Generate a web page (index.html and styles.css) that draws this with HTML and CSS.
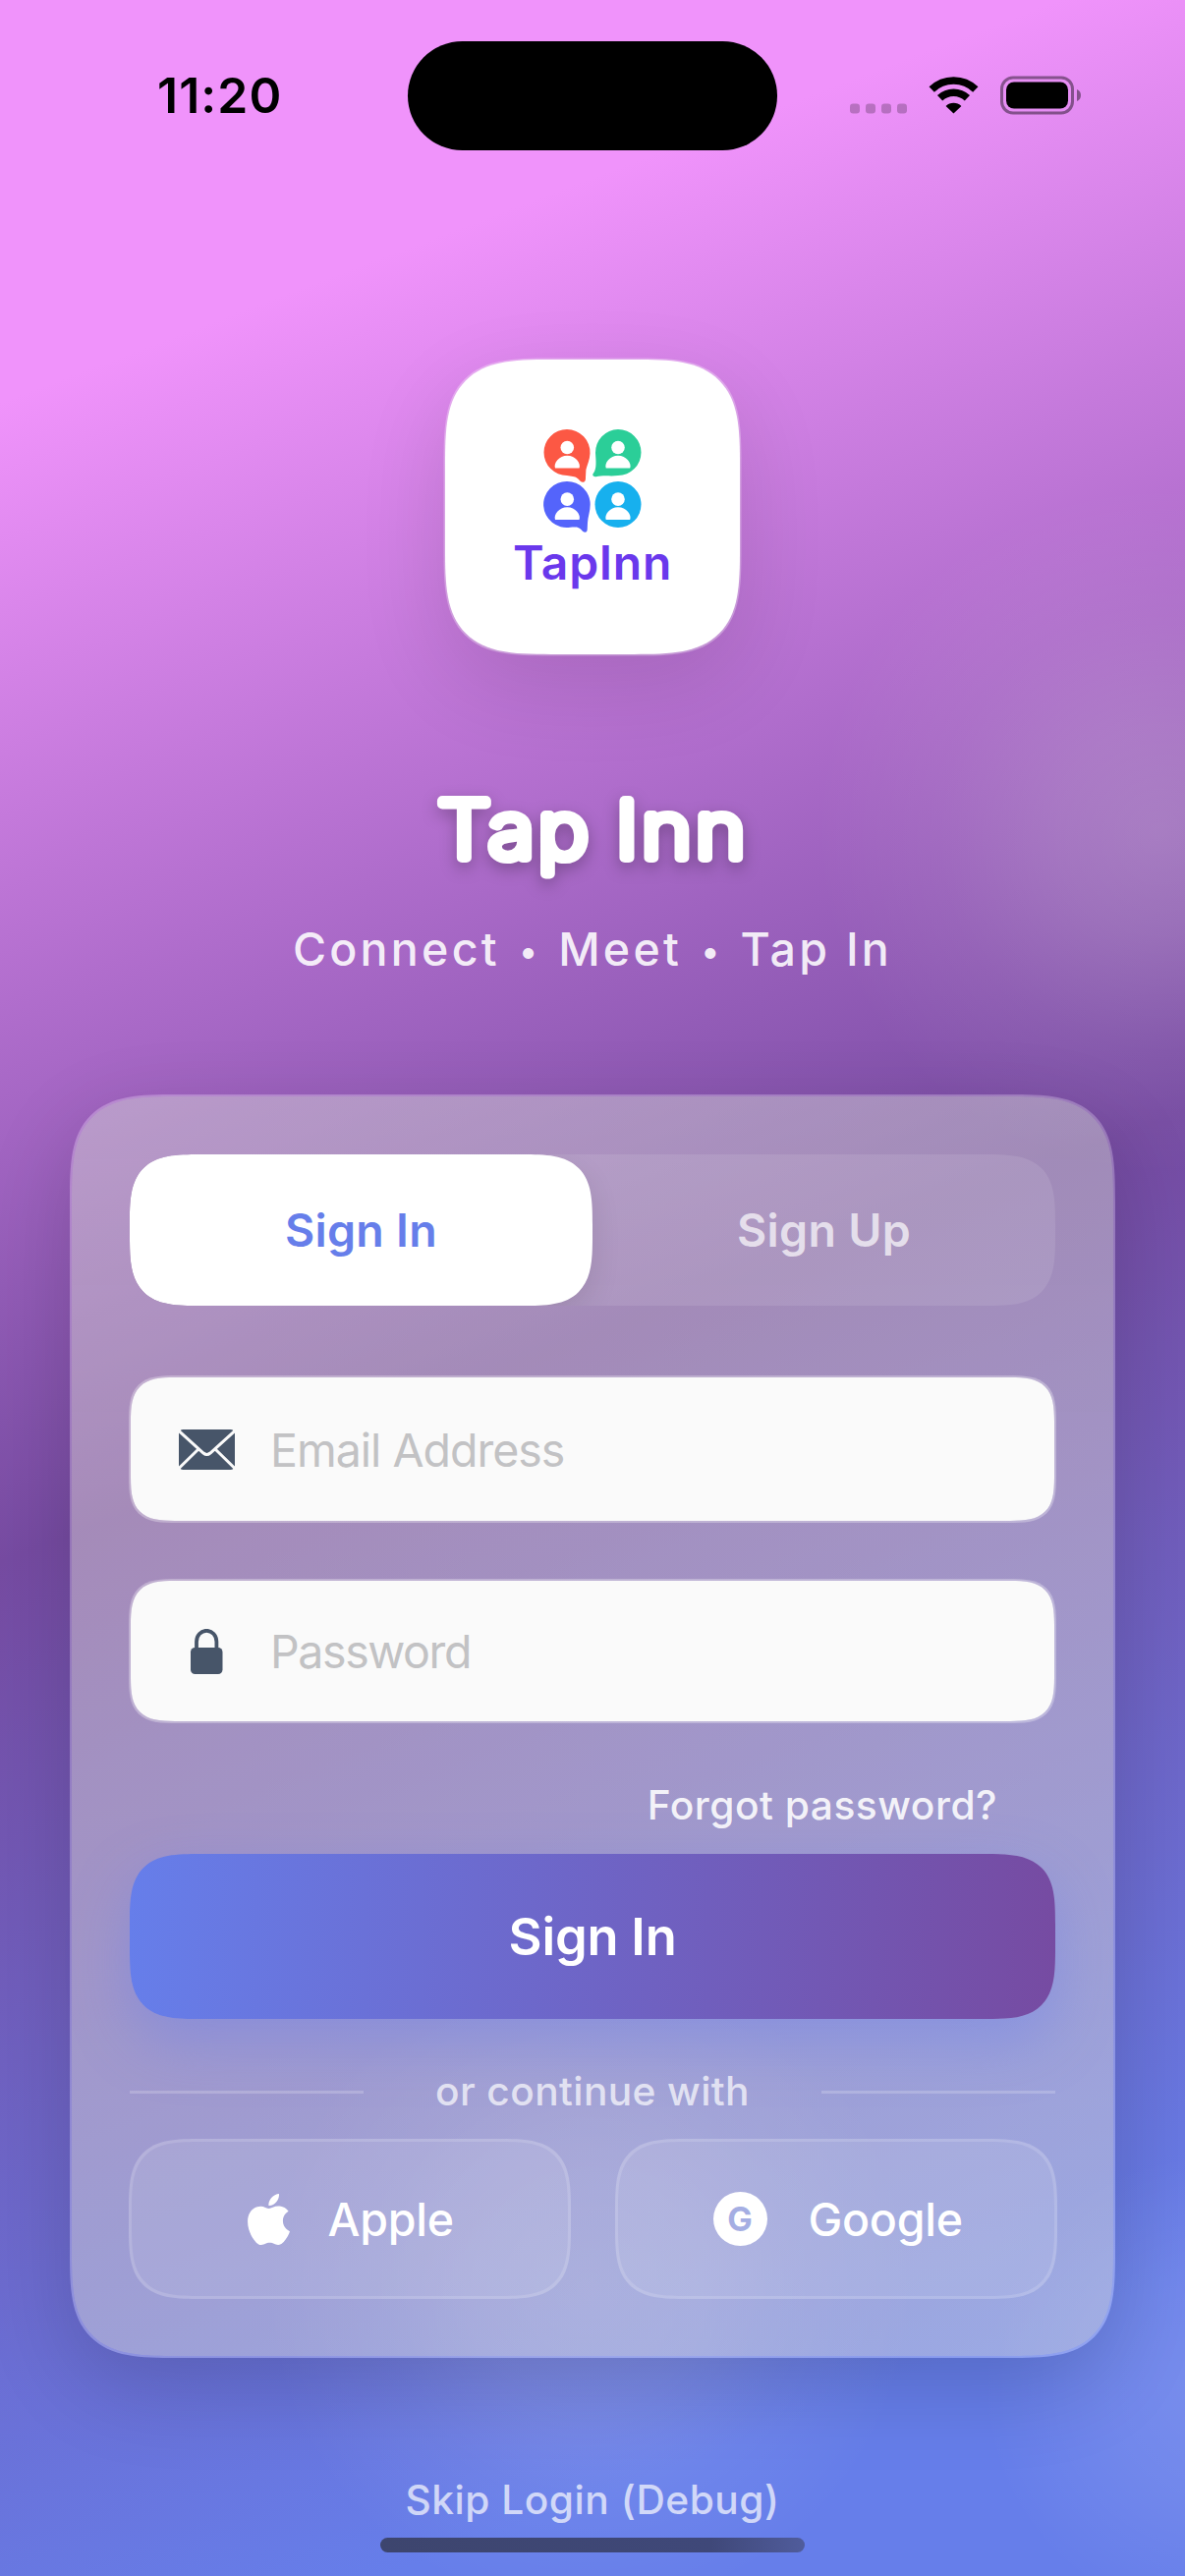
FILE: index.html
```html
<!DOCTYPE html>
<html lang="en">
<head>
<meta charset="utf-8">
<meta name="viewport" content="width=device-width">
<title>Tap Inn</title>
<link rel="stylesheet" href="styles.css">
</head>
<body>
<div class="screen">
  <header class="status">
    <span class="time">11:20</span>
    <span class="island"></span>
    <svg class="indicators" width="236" height="38" viewBox="0 0 236 38" aria-hidden="true">
      <g opacity=".22">
        <rect x="0" y="27.500" width="10" height="10" rx="3.2"/>
        <rect x="16" y="27.500" width="10" height="10" rx="3.2"/>
        <rect x="32" y="27.500" width="10" height="10" rx="3.2"/>
        <rect x="48" y="27.500" width="10" height="10" rx="3.2"/>
      </g>
      <g fill="none" stroke="#000" stroke-width="7.6">
        <path d="M83.2 13.1a32 32 0 0 1 44.6 0"/>
        <path d="M91.6 21.8a20.2 20.2 0 0 1 27.8 0"/>
      </g>
      <path d="M97.6 29.9a11.4 11.4 0 0 1 15.8 0L105.5 37.500z"/>
      <g opacity=".42">
        <rect x="154.5" y="1" width="72" height="36" rx="11.5" fill="none" stroke="#000" stroke-width="3"/>
        <path d="M231 13v12c2.600-1 4-3.300 4-6s-1.400-5-4-6z"/>
      </g>
      <rect x="159" y="5.500" width="63" height="27" rx="8"/>
    </svg>
  </header>

  <div class="logo">
    <svg width="100" height="106" viewBox="0 0 100 106" aria-hidden="true">
      <path fill="#fc5844" d="M24 0a23.500 23.500 0 0 1 23.500 24.500c-.2 6-2.900 11.500-4.100 16.500l-.5 10c-.2 3-3.300 3.600-5.300 1.800-3-3.600-5-4.800-9-5.100l-4.600-.7A23.500 23.500 0 0 1 24 0z"/>
      <path fill="#2bce98" d="M76 0a23.500 23.500 0 0 1 0 47c-7 1-15-.5-22.500 1.200-2.500.5-4.300-1.800-2.500-3.600C54.500 40 53.500 32 53 24A23.400 23.400 0 0 1 76 0z"/>
      <path fill="#5464fb" d="M24.300 53a23.500 23.500 0 0 1 23.400 23.500c0 7-2.500 13-2.700 18.500l-.3 7c-.3 3.300-2.700 3.400-4.700 1.700-4-5-7.700-4-12.700-4A23.500 23.500 0 1 1 24.300 53z"/>
      <circle cx="76" cy="76.500" r="23.500" fill="#17b0ee"/>
      <g fill="#fff">
        <g id="person"><circle cx="24.300" cy="18.500" r="6.800"/><path d="M12 39.500c-2-5 4-12.800 12.300-12.800S38.500 34.500 36.500 39.500z"/></g>
        <use href="#person" x="51.700"/>
        <use href="#person" y="52.600"/>
        <use href="#person" x="51.700" y="52.600"/>
      </g>
    </svg>
    <span class="logo-name">TapInn</span>
  </div>

  <h1 class="title">
    <svg width="360" height="120" viewBox="0 0 360 120"><text transform="translate(22.500 88.500) scale(1.08 1)">Tap Inn</text></svg>
  </h1>
  <p class="subtitle">Connect <span class="dot">•</span> Meet <span class="dot">•</span> Tap In</p>

  <main class="card">
    <div class="tabs">
      <button class="tab active">Sign In</button>
      <button class="tab">Sign Up</button>
    </div>

    <label class="field email">
      <svg width="57" height="41" viewBox="0 0 57 41" aria-hidden="true">
        <rect width="57" height="41" rx="4.500" fill="#475569"/>
        <path d="M-1 .5 25 24q3.500 3 7 0L58 .5M-1 40.500 20.500 19.500M58 40.500 36.500 19.500" fill="none" stroke="#fafafa" stroke-width="3"/>
      </svg>
      <input type="email" placeholder="Email Address">
    </label>

    <label class="field password">
      <svg width="57" height="46" viewBox="0 0 57 46" aria-hidden="true">
        <path d="M18 21V13a10.200 11.200 0 0 1 20.400 0v8" fill="none" stroke="#475569" stroke-width="3.800"/>
        <rect x="12" y="19" width="32.500" height="27" rx="4.500" fill="#475569"/>
      </svg>
      <input type="password" placeholder="Password">
    </label>

    <a class="forgot">Forgot password?</a>
    <button class="submit">Sign In</button>

    <div class="divider"><span>or continue with</span></div>

    <div class="social">
      <button class="provider apple">
        <svg width="43" height="52" viewBox="2.200 0 19.600 24" preserveAspectRatio="none" aria-hidden="true"><path fill="#fff" d="M12.152 6.896c-.948 0-2.415-1.078-3.96-1.040-2.040.027-3.910 1.183-4.961 3.014-2.117 3.675-.546 9.103 1.519 12.090 1.013 1.454 2.208 3.090 3.792 3.039 1.520-.065 2.090-.987 3.935-.987 1.831 0 2.350.987 3.960.948 1.637-.026 2.676-1.480 3.676-2.948 1.156-1.688 1.636-3.325 1.662-3.415-.039-.013-3.182-1.221-3.220-4.857-.026-3.040 2.480-4.494 2.597-4.559-1.429-2.090-3.623-2.324-4.390-2.376-2-.156-3.675 1.090-4.610 1.090zM15.530 3.830c.843-1.012 1.400-2.427 1.245-3.830-1.207.052-2.662.805-3.532 1.818-.780.896-1.454 2.338-1.273 3.714 1.338.104 2.715-.688 3.559-1.701"/></svg>
        <span>Apple</span>
      </button>
      <button class="provider google">
        <b class="g-mark">G</b>
        <span>Google</span>
      </button>
    </div>
  </main>

  <a class="skip">Skip Login (Debug)</a>
  <div class="home-bar"></div>
</div>
</body>
</html>
```
FILE: styles.css
```css
* { box-sizing: border-box; margin: 0; }

body { font-family: Inter, "Liberation Sans", sans-serif; }

button, input { font: inherit; border: 0; padding: 0; background: none; letter-spacing: inherit; }

.screen {
  display: flex;
  flex-direction: column;
  align-items: center;
  width: 1206px;
  height: 2622px;
  overflow: hidden;
  background:
    radial-gradient(circle 350px at 1180px 845px, rgba(245,255,235,.2) 0%, rgba(245,255,235,.15) 30%, rgba(245,255,235,.06) 64%, rgba(245,255,235,0) 100%),
    radial-gradient(circle 330px at 600px 2330px, rgba(255,255,255,.16) 0%, rgba(255,255,255,.12) 35%, rgba(255,255,255,.05) 65%, rgba(255,255,255,0) 100%),
    radial-gradient(circle 240px at 1240px 2430px, rgba(255,255,255,.12) 0%, rgba(255,255,255,.08) 45%, rgba(255,255,255,0) 100%),
    linear-gradient(159.2deg, #f093fb 13.3%, #764ba2 51.6%, #667eea 90%);
}
.screen > *, .card > * { flex-shrink: 0; }

/* Status bar */
.status {
  display: grid;
  grid-template-columns: 415px 376px 415px;
  align-items: center;
  width: 100%;
  height: 111px;
  margin-top: 41.5px;
}
.time {
  padding-left: 160px;
  font-size: 49.8px;
  font-weight: 600;
  line-height: 60px;
  letter-spacing: 1.1px;
}
.island { height: 111px; border-radius: 56px; background: #000; }
.indicators { margin-left: 74px; overflow: visible; }

/* Brand */
.logo {
  display: flex;
  flex-direction: column;
  align-items: center;
  width: 300px;
  height: 300px;
  margin-top: 213.5px;
  padding-top: 71px;
  border-radius: 108px;
  corner-shape: superellipse(1.67);
  background: #fff;
  box-shadow: 0 0 0 1.5px rgba(255,255,255,.3), 0 30px 90px rgba(0,0,0,.12);
}
.logo svg { flex: none; overflow: visible; }
.logo-name {
  color: #6a38ec;
  font-size: 48px;
  font-weight: 600;
  line-height: 60px;
  letter-spacing: .73px;
}

.title { height: 120px; margin-top: 118px; }
.title svg { display: block; overflow: visible; filter: drop-shadow(0 6px 8px rgba(0,0,0,.26)); }
.title text {
  fill: #fff;
  stroke: #fff;
  stroke-width: 10.2px;
  stroke-linejoin: round;
  stroke-linecap: round;
  font-size: 79.5px;
  font-weight: 250;
  letter-spacing: 4px;
  word-spacing: -4px;
}
.subtitle {
  margin-top: 32px;
  color: rgba(255,255,255,.9);
  font-size: 46.5px;
  font-weight: 500;
  line-height: 60px;
  letter-spacing: 3.26px;
}
.dot {
  display: inline-block;
  width: 28px;
  font-size: 35px;
  letter-spacing: 0;
  line-height: 50px;
  text-align: center;
  transform: translate(-1px, -2px);
}

/* Form card */
.card {
  display: flex;
  flex-direction: column;
  width: 1064px;
  height: 1286px;
  margin-top: 118px;
  padding: 59px;
  border: 2px solid rgba(255,255,255,.24);
  border-radius: 109px;
  corner-shape: superellipse(1.67);
  background: linear-gradient(180deg, rgba(216,224,213,.43), rgba(230,228,217,.42) 30%);
  background-clip: padding-box;
  box-shadow: 0 30px 90px rgba(0,0,0,.16);
}

.tabs {
  display: grid;
  grid-template-columns: 1fr 1fr;
  height: 154px;
  overflow: hidden;
  border-radius: 72px;
  corner-shape: superellipse(1.67);
  background: rgba(255,255,255,.1);
}
.tab {
  border-radius: 72px;
  corner-shape: superellipse(1.67);
  color: rgba(255,255,255,.7);
  font-size: 46.5px;
  font-weight: 600;
  letter-spacing: .3px;
}
.tab.active {
  color: #667eea;
  background: #fff;
  box-shadow: 0 12px 30px rgba(0,0,0,.1);
}

.field {
  display: flex;
  align-items: center;
  gap: 36px;
  margin: 71px -1px 0;
  height: 150px;
  padding: 0 49px;
  border: 2px solid rgba(255,255,255,.3);
  border-radius: 50px;
  corner-shape: superellipse(1.67);
  background: #fafafa;
  background-clip: padding-box;
}
.field.password { height: 147px; margin-top: 57px; }
.field input {
  flex: 1;
  min-width: 0;
  height: 60px;
  margin-top: 1px;
  font-size: 46.5px;
  letter-spacing: -1px;
  outline: none;
}
.field.password input { letter-spacing: -1.4px; }
.field input::placeholder { color: #c2c2c4; opacity: 1; }

.forgot {
  align-self: flex-end;
  margin: 54px 59px 0 0;
  color: rgba(255,255,255,.9);
  font-size: 40.7px;
  font-weight: 500;
  line-height: 60px;
  letter-spacing: .5px;
}
.submit {
  height: 168px;
  margin-top: 19px;
  border-radius: 72px;
  corner-shape: superellipse(1.67);
  background: linear-gradient(90deg, #667eea, #764ba2);
  box-shadow: 0 24px 60px rgba(102,126,234,.4);
  color: #fff;
  font-size: 52.4px;
  font-weight: 600;
  letter-spacing: -.2px;
}

.divider {
  display: flex;
  align-items: center;
  gap: 73px;
  height: 60px;
  margin-top: 44px;
  color: rgba(255,255,255,.7);
  font-size: 40.7px;
  font-weight: 500;
  line-height: 60px;
  letter-spacing: .38px;
}
.divider::before, .divider::after {
  content: "";
  flex: 1;
  height: 3px;
  background: rgba(255,255,255,.2);
}

.social { display: grid; grid-template-columns: 1fr 1fr; gap: 45px; margin: 18px -1.5px 0; }
.provider {
  display: flex;
  align-items: center;
  height: 163px;
  border: 3px solid rgba(255,255,255,.14);
  border-radius: 74px;
  corner-shape: superellipse(1.67);
  background: rgba(255,255,255,.1);
  color: #fff;
  font-size: 46.5px;
  font-weight: 500;
  letter-spacing: -.25px;
}
.apple { padding-left: 118px; gap: 39px; }
.google { padding-left: 97px; gap: 42px; }
.g-mark {
  width: 55px;
  height: 55px;
  border-radius: 50%;
  background: #fff;
  color: #a5aee3;
  font-size: 34px;
  font-weight: 700;
  line-height: 55px;
  text-align: center;
}

.skip {
  margin-top: 115px;
  color: rgba(255,255,255,.7);
  font-size: 40.7px;
  font-weight: 500;
  line-height: 60px;
  letter-spacing: .51px;
}
.home-bar {
  width: 432px;
  height: 15px;
  margin-top: 8px;
  border-radius: 8px;
  background: linear-gradient(90deg, #3d456e, #3f4879 78%, #505c9c);
}
```
